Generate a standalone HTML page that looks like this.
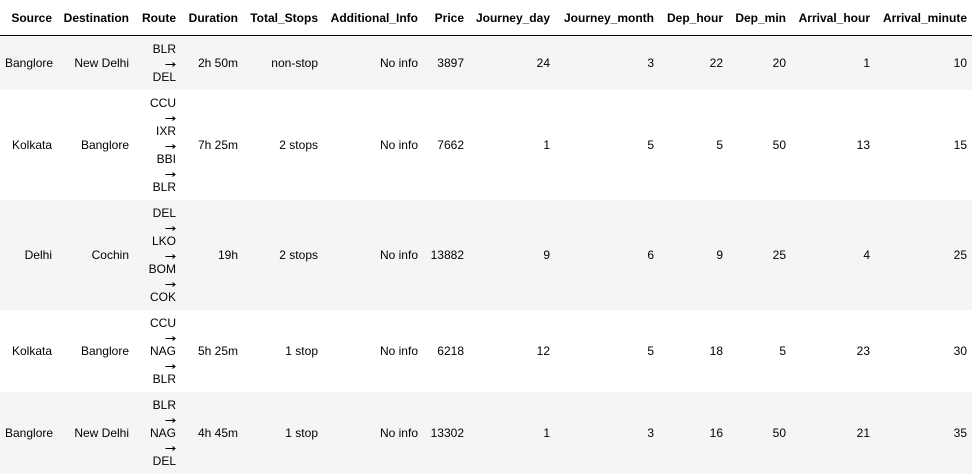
<!DOCTYPE html>
<html><head><meta charset="utf-8"><style>
html,body{margin:0;padding:0;background:#fff;}
body{width:977px;height:468px;overflow:hidden;font-family:"Liberation Sans",Arial,sans-serif;font-size:12px;color:#000;}
table{border-collapse:collapse;table-layout:fixed;width:972px;}
th,td{padding:0 5px;text-align:right;vertical-align:middle;line-height:14px;overflow:hidden;white-space:nowrap;}
th{font-weight:bold;height:35px;border-bottom:1px solid #000;}
td{white-space:normal;}
tr.o td{background:#f5f5f5;}
i{display:inline-block;vertical-align:top;width:11px;height:14px;font-style:normal;}
i svg{display:block;}
</style></head><body>
<table>
<colgroup><col style="width:57px"><col style="width:77px"><col style="width:47px"><col style="width:62px"><col style="width:80px"><col style="width:100px"><col style="width:46px"><col style="width:86px"><col style="width:104px"><col style="width:69px"><col style="width:63px"><col style="width:84px"><col style="width:97px"></colgroup>
<tr><th>Source</th><th>Destination</th><th>Route</th><th>Duration</th><th>Total_Stops</th><th>Additional_Info</th><th>Price</th><th>Journey_day</th><th>Journey_month</th><th>Dep_hour</th><th>Dep_min</th><th>Arrival_hour</th><th>Arrival_minute</th></tr>
<tr class="o" style="height:54px"><td>Banglore</td><td>New Delhi</td><td>BLR<br><i><svg width="11" height="14"><path d="M0.5 8.5H10M7.5 6.5L10 8.5L7.5 10.5" stroke="#000" stroke-width="1.1" fill="none"/></svg></i><br>DEL</td><td>2h 50m</td><td>non-stop</td><td>No info</td><td>3897</td><td>24</td><td>3</td><td>22</td><td>20</td><td>1</td><td>10</td></tr>
<tr style="height:110px"><td>Kolkata</td><td>Banglore</td><td>CCU<br><i><svg width="11" height="14"><path d="M0.5 8.5H10M7.5 6.5L10 8.5L7.5 10.5" stroke="#000" stroke-width="1.1" fill="none"/></svg></i><br>IXR<br><i><svg width="11" height="14"><path d="M0.5 8.5H10M7.5 6.5L10 8.5L7.5 10.5" stroke="#000" stroke-width="1.1" fill="none"/></svg></i><br>BBI<br><i><svg width="11" height="14"><path d="M0.5 8.5H10M7.5 6.5L10 8.5L7.5 10.5" stroke="#000" stroke-width="1.1" fill="none"/></svg></i><br>BLR</td><td>7h 25m</td><td>2 stops</td><td>No info</td><td>7662</td><td>1</td><td>5</td><td>5</td><td>50</td><td>13</td><td>15</td></tr>
<tr class="o" style="height:110px"><td>Delhi</td><td>Cochin</td><td>DEL<br><i><svg width="11" height="14"><path d="M0.5 8.5H10M7.5 6.5L10 8.5L7.5 10.5" stroke="#000" stroke-width="1.1" fill="none"/></svg></i><br>LKO<br><i><svg width="11" height="14"><path d="M0.5 8.5H10M7.5 6.5L10 8.5L7.5 10.5" stroke="#000" stroke-width="1.1" fill="none"/></svg></i><br>BOM<br><i><svg width="11" height="14"><path d="M0.5 8.5H10M7.5 6.5L10 8.5L7.5 10.5" stroke="#000" stroke-width="1.1" fill="none"/></svg></i><br>COK</td><td>19h</td><td>2 stops</td><td>No info</td><td>13882</td><td>9</td><td>6</td><td>9</td><td>25</td><td>4</td><td>25</td></tr>
<tr style="height:82px"><td>Kolkata</td><td>Banglore</td><td>CCU<br><i><svg width="11" height="14"><path d="M0.5 8.5H10M7.5 6.5L10 8.5L7.5 10.5" stroke="#000" stroke-width="1.1" fill="none"/></svg></i><br>NAG<br><i><svg width="11" height="14"><path d="M0.5 8.5H10M7.5 6.5L10 8.5L7.5 10.5" stroke="#000" stroke-width="1.1" fill="none"/></svg></i><br>BLR</td><td>5h 25m</td><td>1 stop</td><td>No info</td><td>6218</td><td>12</td><td>5</td><td>18</td><td>5</td><td>23</td><td>30</td></tr>
<tr class="o" style="height:82px"><td>Banglore</td><td>New Delhi</td><td>BLR<br><i><svg width="11" height="14"><path d="M0.5 8.5H10M7.5 6.5L10 8.5L7.5 10.5" stroke="#000" stroke-width="1.1" fill="none"/></svg></i><br>NAG<br><i><svg width="11" height="14"><path d="M0.5 8.5H10M7.5 6.5L10 8.5L7.5 10.5" stroke="#000" stroke-width="1.1" fill="none"/></svg></i><br>DEL</td><td>4h 45m</td><td>1 stop</td><td>No info</td><td>13302</td><td>1</td><td>3</td><td>16</td><td>50</td><td>21</td><td>35</td></tr>
</table>
</body></html>
